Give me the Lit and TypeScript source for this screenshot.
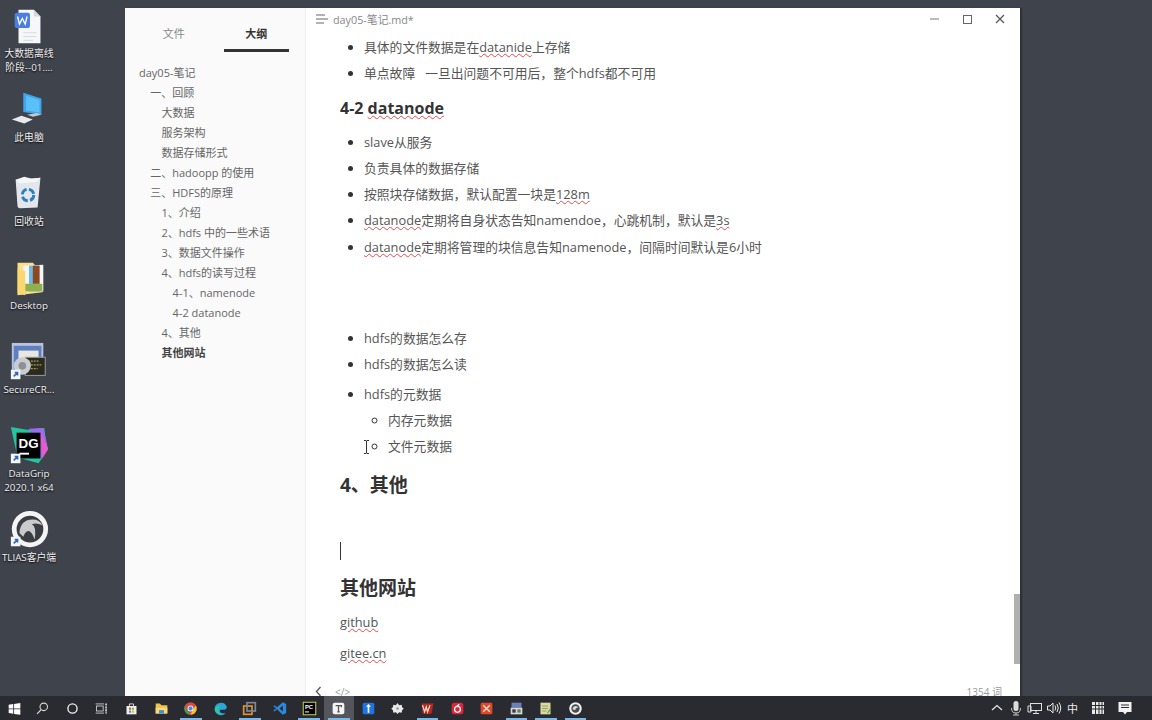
import { LitElement, html, css, svg } from 'lit';
import { customElement } from 'lit/decorators.js';

const outline = [
  { t: 'day05-笔记', l: 0 },
  { t: '一、回顾', l: 1 },
  { t: '大数据', l: 2 },
  { t: '服务架构', l: 2 },
  { t: '数据存储形式', l: 2 },
  { t: '二、hadoopp 的使用', l: 1 },
  { t: '三、HDFS的原理', l: 1 },
  { t: '1、介绍', l: 2 },
  { t: '2、hdfs 中的一些术语', l: 2 },
  { t: '3、数据文件操作', l: 2 },
  { t: '4、hdfs的读写过程', l: 2 },
  { t: '4-1、namenode', l: 3 },
  { t: '4-2 datanode', l: 3 },
  { t: '4、其他', l: 2 },
  { t: '其他网站', l: 2, b: true },
];

const desktopIcons = [
  {
    y: 6, dy: 0, label: '大数据离线<br>阶段--01....',
    icon: svg`<path d="M11 3h16l7 7v28H11z" fill="#f6f7f9"/><path d="M27 3l7 7h-7z" fill="#d5d8de"/><rect x="7" y="6" width="16" height="16" rx="2" fill="#4a7fe0"/><path d="M10 10l2 8 3-6 3 6 2-8" fill="none" stroke="#fff" stroke-width="1.4"/><path d="M16 27h14M16 31h14M16 35h10" stroke="#d6d9de"/>`,
  },
  {
    y: 90, dy: -2, label: '此电脑',
    icon: svg`<path d="M16 4l19 6v17l-19-3z" fill="#3da6ee"/><path d="M19 7l14 4.500v13l-14-2z" fill="#5cc0f8"/><path d="M4 32l10-4 12 4-9 4z" fill="#e8e9eb"/><path d="M20 27l10-2 5 2-9 2z" fill="#c5c8cc"/>`,
  },
  {
    y: 174, dy: -3, label: '回收站',
    icon: svg`<path d="M8 8l26-2-3 31-18 1q-2 0-3-2z" fill="#e3e6ea"/><path d="M8 8l9-3 8 2 9-1-4 4-18 2z" fill="#f5f6f7"/><circle cx="21" cy="24" r="6" fill="none" stroke="#2a7fc0" stroke-width="3" stroke-dasharray="7 2.500"/>`,
  },
  {
    y: 258, dy: 1, label: 'Desktop',
    icon: svg`<path d="M10 3h16l3 3h7v28l-26 3z" fill="#fbe08c"/><path d="M16 6l21-1v28H16z" fill="#f5f5f5"/><path d="M22 6h11v27H22z" fill="#6fb7e6"/><path d="M26 6h7v19h-7z" fill="#8c4a20"/><path d="M18 25h18v8H18z" fill="#8fb04a"/><path d="M10 9l8 3v25l-8-2z" fill="#fbd772"/>`,
  },
  {
    y: 342, dy: -2, label: 'SecureCR...',
    icon: svg`<rect x="4" y="2" width="33" height="33" fill="#b8c4dc"/><rect x="6" y="5" width="29" height="28" fill="#5e7fc0"/><rect x="11" y="10" width="21" height="12" fill="#e8e8e0"/><rect x="18" y="17" width="21" height="19" fill="#2a2a20" stroke="#9aa0a0"/><path d="M21 21h12M21 25h14M21 29h10" stroke="#d8c040" stroke-dasharray="2 1"/><circle cx="15" cy="26" r="9" fill="#c9ccd0"/><circle cx="15" cy="26" r="4" fill="#8d9095"/><rect x="3" y="30" width="10" height="10" fill="#f3f5f8"/><path d="M6 37l4-4M7 33h3v3" stroke="#2a68b8" stroke-width="1.600" fill="none"/>`,
  },
  {
    y: 426, dy: -2, label: 'DataGrip<br>2020.1 x64',
    icon: svg`<path d="M3 2l17 3 18-2 3 24-9 13-22-6z" fill="#28c2a0"/><path d="M22 4l15-1 5 22-7 10z" fill="#9a6cf0"/><path d="M34 6l8 19-6 10z" fill="#e85ac8"/><rect x="9" y="8" width="25" height="27" fill="#000"/><text x="21.500" y="24" font-family="Liberation Sans" font-size="14" font-weight="700" fill="#fff" text-anchor="middle">DG</text><rect x="12" y="29" width="10" height="2" fill="#fff"/><rect x="3" y="30" width="10" height="10" fill="#f3f5f8"/><path d="M6 37l4-4M7 33h3v3" stroke="#2a68b8" stroke-width="1.600" fill="none"/>`,
  },
  {
    y: 510, dy: -1, label: 'TLIAS客户端',
    icon: svg`<circle cx="23" cy="20" r="19" fill="#f4f4f4"/><circle cx="23" cy="20" r="14" fill="#3b3d44"/><path d="M12 24q1-14 14-14 7 0 10 6-6-3-11-1 5 2 3 16-3-8-6-9-4 0-6 6z" fill="#c9cacc"/><rect x="3" y="28" width="10" height="10" fill="#f3f5f8"/><path d="M6 35l4-4M7 31h3v3" stroke="#2a68b8" stroke-width="1.600" fill="none"/>`,
  },
];

const taskIcons = [
  { x: svg`<path d="M2 4.500l5.500-.8v5.300H2zM8.500 3.500L16 2.500v6.500H8.500zM2 10h5.500v5.300L2 14.500zM8.500 10H16v6.500l-7.500-1z" fill="#fff"/>` },
  { x: svg`<circle cx="10.500" cy="7" r="4.500" fill="none" stroke="#d8d8d8" stroke-width="1.300"/><path d="M7.300 10.300L2.500 15.500" stroke="#d8d8d8" stroke-width="1.500"/>` },
  { x: svg`<circle cx="9" cy="9" r="5.500" fill="none" stroke="#f2f2f2" stroke-width="1.600"/>` },
  { x: svg`<path d="M2 3.500h10M2 14.500h10" stroke="#d8d8d8"/><rect x="3" y="6" width="8" height="6" fill="none" stroke="#d8d8d8"/><path d="M14.500 3v12" stroke="#d8d8d8" stroke-width="2" stroke-dasharray="2.500 1"/>` },
  { x: svg`<path d="M3 6h12v10H3z" fill="#eceef0"/><path d="M6.500 6V3.500h5V6" fill="none" stroke="#eceef0"/><rect x="6" y="8" width="2.500" height="2.500" fill="#e8552a"/><rect x="9.500" y="8" width="2.500" height="2.500" fill="#7fbb3a"/><rect x="6" y="11.500" width="2.500" height="2.500" fill="#2a9ae0"/><rect x="9.500" y="11.500" width="2.500" height="2.500" fill="#f3b92a"/>` },
  { x: svg`<path d="M2 3h5l2 2h7v10H2z" fill="#f0c24b"/><path d="M2 8h14v7H2z" fill="#f6d97e"/><path d="M6 11h6v4H6z" fill="#3b93d6"/>` },
  { x: svg`<circle cx="9" cy="9" r="7.500" fill="#dc4a3c"/><path d="M2.500 5.500L6 13l3 3.500A7.500 7.500 0 0 1 2.500 5.500z" fill="#3aa657"/><path d="M15.500 5.500A7.500 7.500 0 0 1 9 16.500L12.500 9z" fill="#f5c62e"/><circle cx="9" cy="9" r="3.500" fill="#fff"/><circle cx="9" cy="9" r="2.600" fill="#4a8ae8"/>` },
  { x: svg`<path d="M2 10a7.500 7.500 0 0 1 14.500-3c.5 3-3 4-6 3.500-3-.5-3 3 0 4 2 .5 4 .5 5-.5A7.500 7.500 0 0 1 2 10z" fill="#2aa6d8"/><path d="M2 10c1-4 6-5 8-3-3 0-4 3-3 6 .5 1.500 2 3 4 3.300A7.500 7.500 0 0 1 2 10z" fill="#2fc6a0"/>` },
  { x: svg`<rect x="2" y="6" width="10" height="10" fill="none" stroke="#e8902a" stroke-width="2"/><rect x="6" y="2" width="10" height="10" fill="none" stroke="#7a8a9a" stroke-width="2"/>` },
  { x: svg`<path d="M13 1.500l4 2v11l-4 2-7-6.500-3 2.500-1.500-1L5 9 1.500 6 3 5l3 2.500zM13 5.500L9 9l4 3.500z" fill="#2a8ae0"/>` },
  { x: svg`<rect x="1.500" y="1.500" width="15" height="15" fill="#000" stroke="#c8d44a" stroke-width="1.200"/><text x="3.500" y="9.500" font-family="Liberation Sans" font-size="7" font-weight="700" fill="#fff">PC</text><rect x="3.500" y="12.500" width="5" height="1.200" fill="#fff"/>` },
  { x: svg`<rect x="2" y="2" width="14" height="14" rx="2.500" fill="#f5f5f5"/><path d="M5.500 5.500h7v2M9 5.500v7.500M7.500 13h3" fill="none" stroke="#555" stroke-width="1.500"/>`, active: true },
  { x: svg`<rect x="2" y="2" width="14" height="14" rx="2" fill="#1f74e0"/><path d="M9 3.500l3 3.500h-2v7H8V7H6z" fill="#fff"/>` },
  { x: svg`<path d="M9 2.500l2 2.500 3-.5.500 3 2 1.500-2 2-.5 3-3-.5-2 2-2-2-3 .5-.500-3-2-2 2-1.500.5-3 3 .5z" fill="#e8eaea"/><circle cx="9" cy="9" r="1.500" fill="#8a9a90"/>` },
  { x: svg`<path d="M2 3h14l-2 12-4 1-7-1z" fill="#b8261e"/><path d="M3 5l2.500 8 2-6 1.500 6 3-8" fill="none" stroke="#f4e0d0" stroke-width="1.500"/>` },
  { x: svg`<rect x="2" y="2" width="14" height="14" rx="3" fill="#e0243a"/><circle cx="9" cy="10" r="3.500" fill="none" stroke="#fff" stroke-width="1.500"/><path d="M11 4L8 6.500" stroke="#fff" stroke-width="1.500"/>` },
  { x: svg`<rect x="2" y="2" width="14" height="14" rx="1.500" fill="#e0482a"/><path d="M5 5l8 8M13 5l-8 8" stroke="#f8d8c0" stroke-width="1.800"/>` },
  { x: svg`<rect x="3" y="2" width="12" height="6" fill="#6a80b8"/><rect x="2" y="8" width="14" height="8" fill="#d8d8d8"/><rect x="4" y="10" width="4" height="4" fill="#3a3a40"/><rect x="10" y="10" width="4" height="4" fill="#5a8a4a"/>` },
  { x: svg`<rect x="3" y="2" width="12" height="14" fill="#dcd8a0"/><path d="M5 6h7M5 9h7M5 12h5" stroke="#7a9a5a"/><path d="M11 14l4-6 1 1-4 6z" fill="#4aa84a"/>` },
  { x: svg`<circle cx="9" cy="9" r="7.500" fill="#f0f0f0"/><circle cx="9" cy="9" r="5" fill="#4a4c52"/><path d="M5.500 10q.5-4 4-4 2 0 3 2-3-1-4 3z" fill="#d8d8d8"/>` },
];

const RUNNING = new Set([6, 8, 10, 11, 14, 17, 18, 19]);

@customElement('app-root')
export class AppRoot extends LitElement {
  static styles = css`
    :host {
      display: flex;
      flex-direction: column;
      width: 1152px;
      height: 720px;
      overflow: hidden;
      background: #3f434c;
      font-family: 'Open Sans', 'Noto Sans CJK SC', sans-serif;
    }

    .desk {
      flex: 1;
      min-height: 0;
      display: flex;
      padding-top: 8px;
    }

    .icons {
      position: relative;
      width: 125px;
      flex: none;
      margin-top: -8px;
    }

    .dicon {
      position: absolute;
      left: 0;
      width: 58px;
      display: flex;
      flex-direction: column;
      align-items: center;
      color: #f0f0f0;
      font-size: 9.800px;
      line-height: 14px;
      text-align: center;
      white-space: nowrap;
      text-shadow: 0 1px 2px #000;
    }

    .dicon svg {
      width: 42px;
      height: 42px;
      margin-bottom: -1px;
      overflow: visible;
    }

    .win {
      width: 895px;
      flex: none;
      display: flex;
      background: #fff;
      overflow: hidden;
      box-shadow: 2px 0 1px #2f3137;
    }

    .side {
      width: 181px;
      flex: none;
      background: #fafafa;
      border-right: 1px solid #f0f0f0;
      box-sizing: border-box;
      color: #666;
    }

    .tabs {
      display: flex;
      padding: 17px 16px 0 16px;
      font-size: 11px;
      line-height: 18px;
      text-align: center;
    }

    .tab {
      width: 66px;
      padding-bottom: 6px;
      color: #888;
    }

    .tab.on {
      margin-left: 1px;
      color: #333;
      font-weight: 700;
      border-bottom: 3px solid #333;
    }

    .tab:first-child {
      width: 82px;
      padding-right: 16px;
      box-sizing: border-box;
    }

    .tree {
      padding: 11px 0 0 14px;
      font-size: 11px;
      line-height: 20px;
    }

    .row {
      height: 20px;
      white-space: nowrap;
    }

    .row.b {
      font-weight: 700;
      color: #444;
    }

    .main {
      flex: 1;
      min-width: 0;
      position: relative;
      display: flex;
      flex-direction: column;
      color: #555;
    }

    .title {
      height: 22px;
      flex: none;
      display: flex;
      align-items: center;
      padding-left: 10px;
      font-size: 10.800px;
      color: #888;
      gap: 5px;
    }

    .ctrls {
      margin-left: auto;
      margin-right: 3px;
      display: flex;
    }

    .ctrls svg {
      width: 33px;
      height: 22px;
      display: block;
    }

    .doc {
      flex: 1;
      min-height: 0;
      padding: 4px 0 0 34px;
      font-size: 12.800px;
      line-height: 26.300px;
    }

    ul {
      margin: 0;
      padding: 0 0 0 24px;
    }

    ul ul {
      padding-left: 24px;
      list-style: circle;
    }

    li::marker {
      color: #333;
    }

    h3 {
      margin: 8px 0;
      font-size: 16px;
      line-height: 26px;
      font-weight: 700;
      color: #333;
    }

    h2 {
      margin: 11px 0 0;
      font-size: 19px;
      line-height: 28px;
      font-weight: 700;
      color: #333;
    }

    p {
      margin: 5px 0 0;
      line-height: 26px;
    }

    h2 + p {
      margin-top: 7px;
    }

    .s {
      text-decoration: underline wavy #e8484c 0.6px;
      text-underline-offset: 0.5px;
    }

    .gap-a {
      height: 65px;
    }

    .tall {
      padding-top: 3px;
    }

    .caret {
      width: 1px;
      height: 18px;
      background: #333;
      margin: 43px 0 14px;
    }

    .ibeam {
      position: absolute;
      left: 56px;
      top: 432px;
      width: 9px;
      height: 14px;
    }

    .scroll {
      position: absolute;
      right: 0;
      top: 586px;
      width: 6px;
      height: 70px;
      background: #b0b0b0;
    }

    .foot {
      height: 10px;
      flex: none;
      display: flex;
      align-items: flex-start;
      padding: 0 14px 0 9px;
      font-size: 10px;
      line-height: 12px;
      color: #999;
      gap: 13px;
      overflow: hidden;
    }

    .count {
      margin-left: auto;
      margin-right: 4px;
    }

    .task {
      height: 24px;
      flex: none;
      display: flex;
      align-items: stretch;
      background: #2a2b30;
    }

    .ti {
      width: 29.600px;
      flex: none;
      position: relative;
      display: flex;
      align-items: center;
      justify-content: center;
    }

    .ti:first-child {
      width: 28px;
    }

    .ti.active {
      background: #55565b;
    }

    .ti.run::after {
      content: '';
      position: absolute;
      left: 4px;
      right: 4px;
      bottom: 0;
      height: 2px;
      background: #76b9ed;
    }

    .ti svg {
      width: 15px;
      height: 15px;
    }

    .tray {
      margin-left: auto;
      display: flex;
      align-items: center;
      color: #e8e8e8;
      font-size: 11px;
    }

    .tray svg {
      display: block;
      height: 16px;
      width: 16px;
    }

    .tray span {
      width: 19px;
      display: flex;
      justify-content: center;
    }

    .tray .zh {
      margin-right: 3px;
    }

    .tray .im {
      width: 26px;
    }

    .tray .note {
      width: 27px;
      margin-right: 14px;
    }
  `;

  private renderDoc() {
    return html`
      <ul>
        <li>具体的文件数据是在<span class="s">datanide</span>上存储</li>
        <li>单点故障&nbsp;&nbsp;&nbsp;一旦出问题不可用后，整个hdfs都不可用</li>
      </ul>
      <h3>4-2 <span class="s">datanode</span></h3>
      <ul>
        <li>slave从服务</li>
        <li>负责具体的数据存储</li>
        <li>按照块存储数据，默认配置一块是<span class="s">128m</span></li>
        <li><span class="s">datanode</span>定期将自身状态告知namendoe，心跳机制，默认是<span class="s">3s</span></li>
        <li><span class="s">datanode</span>定期将管理的块信息告知namenode，间隔时间默认是6小时</li>
      </ul>
      <div class="gap-a"></div>
      <ul>
        <li>hdfs的数据怎么存</li>
        <li>hdfs的数据怎么读</li>
        <li class="tall">hdfs的元数据
          <ul>
            <li>内存元数据</li>
            <li>文件元数据</li>
          </ul>
        </li>
      </ul>
      <h2>4、其他</h2>
      <div class="caret"></div>
      <h2>其他网站</h2>
      <p><span class="s">github</span></p>
      <p><span class="s">gitee.cn</span></p>
    `;
  }

  render() {
    return html`
      <div class="desk">
        <div class="icons">
          ${desktopIcons.map(
            (d) => html`<div class="dicon" style="top:${d.y}px">
              <svg viewBox="0 0 44 42"><g transform="translate(0 ${d.dy})">${d.icon}</g></svg>
              <div .innerHTML=${d.label}></div>
            </div>`,
          )}
        </div>
        <div class="win">
          <aside class="side">
            <div class="tabs">
              <div class="tab">文件</div>
              <div class="tab on">大纲</div>
            </div>
            <div class="tree">
              ${outline.map(
                (r) => html`<div class="row ${r.b ? 'b' : ''}" style="padding-left:${r.l * 11.2}px">${r.t}</div>`,
              )}
            </div>
          </aside>
          <main class="main">
            <div class="title">
              <svg width="12" height="10" viewBox="0 0 12 10"><path d="M0 1h9M0 5h12M0 9h8" stroke="#666"/></svg>
              <span>day05-笔记.md*</span>
              <div class="ctrls">
                <svg viewBox="0 0 33 22"><path d="M12 11h9" stroke="#777"/></svg>
                <svg viewBox="0 0 33 22"><rect x="12.500" y="7.500" width="8" height="8" fill="none" stroke="#666"/></svg>
                <svg viewBox="0 0 33 22"><path d="M12 7l8 8M20 7l-8 8" stroke="#555" stroke-width="1.200"/></svg>
              </div>
            </div>
            <div class="doc">${this.renderDoc()}</div>
            <div class="foot">
              <svg width="7" height="10" viewBox="0 0 7 10"><path d="M5.500 1L1.500 5.500 5.500 10" fill="none" stroke="#555" stroke-width="1.300"/></svg>
              <span>&lt;/&gt;</span>
              <span class="count">1354 词</span>
            </div>
            <svg class="ibeam" viewBox="0 0 9 14"><path d="M2 .5h2l.500.5.500-.5h2M4.500 1v12M2 13.500h2l.500-.5.500.5h2" fill="none" stroke="#333"/></svg>
            <div class="scroll"></div>
          </main>
        </div>
      </div>
      <div class="task">
        ${taskIcons.map(
          (t, i) => html`<div class="ti ${t.active ? 'active' : ''} ${RUNNING.has(i) ? 'run' : ''}">
            <svg viewBox="0 0 18 18">${t.x}</svg>
          </div>`,
        )}
        <div class="tray">
          <span><svg viewBox="0 0 16 16"><path d="M3 10l5-4.500 5 4.500" fill="none" stroke="#e8e8e8" stroke-width="1.200"/></svg></span>
          <span><svg viewBox="0 0 16 16"><rect x="5.500" y="1" width="5" height="10" rx="2.500" fill="#dcdcdc"/><path d="M3.500 8q0 5 4.500 5t4.500-5M8 13v2M5 15h6" fill="none" stroke="#c8c8c8"/></svg></span>
          <span><svg viewBox="0 0 16 16"><rect x="3.500" y="3.500" width="11" height="7" fill="none" stroke="#e0e0e0"/><path d="M1 6h3v6H1zM9 10.500v3M6 13.500h6" fill="none" stroke="#e0e0e0"/></svg></span>
          <span><svg viewBox="0 0 16 16"><path d="M1.500 6h2.500l3-3v10l-3-3H1.500z" fill="none" stroke="#e8e8e8"/><path d="M9 5.500q1.500 2.500 0 5M11 4q2.500 4 0 8M13 2.500q3.500 5.500 0 11" fill="none" stroke="#e8e8e8"/></svg></span>
          <span class="zh">中</span>
          <span class="im"><svg viewBox="0 0 16 16"><path d="M2 2h12v12H2z" fill="#e8e8e8"/><path d="M2 5.500h12M2 9h12M5.500 2v12M9 2v12M12 2v12" stroke="#2a2b30"/></svg></span>
          <span class="note"><svg viewBox="0 0 16 16"><path d="M1.500 2h13v10H10l-2 2.500L6 12H1.500z" fill="#f2f2f2"/><path d="M4 5h8M4 7.500h8" stroke="#2a2b30"/></svg></span>
        </div>
      </div>
    `;
  }
}
